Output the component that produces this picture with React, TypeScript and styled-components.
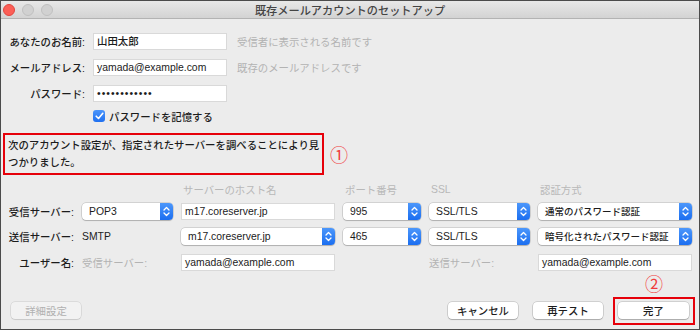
import styled, { createGlobalStyle } from "styled-components";

const GlobalStyle = createGlobalStyle`
  html, body {
    margin: 0;
    padding: 0;
    background: #ececec;
  }
  body {
    font-family: "Liberation Sans", "Noto Sans CJK JP", sans-serif;
    font-size: 10.4px;
    font-weight: 500;
    color: #1c1c1c;
  }
`;

const Window = styled.div`
  width: 700px;
  height: 330px;
  box-sizing: border-box;
  border: 1px solid #4b4b4b;
  background: #ececec;
  display: flex;
  flex-direction: column;
  overflow: hidden;
`;

const TitleBar = styled.div`
  flex: none;
  height: 17px;
  background: linear-gradient(#e8e8e8, #d3d3d3);
  border-bottom: 1px solid #b3b3b3;
  display: grid;
  grid-template-columns: 1fr auto 1fr;
  align-items: center;
`;

const Lights = styled.div`
  display: flex;
  gap: 7px;
  padding-left: 2px;
`;

const Light = styled.span<{ $red?: boolean }>`
  width: 12px;
  height: 12px;
  box-sizing: border-box;
  border-radius: 50%;
  background: ${(p) => (p.$red ? "#fc5f57" : "#d1d1d1")};
  border: 1px solid ${(p) => (p.$red ? "#e2463f" : "#c0c0c0")};
`;

const Title = styled.div`
  font-size: 11.2px;
  color: #444;
`;

const Identity = styled.div`
  margin-top: 14px;
  display: grid;
  grid-template-columns: 84px 134px auto;
  grid-auto-rows: 17px;
  column-gap: 8px;
  row-gap: 9px;
  align-items: center;
`;

const Label = styled.div`
  text-align: right;
  white-space: nowrap;
`;

const Hint = styled.div`
  color: #b3b3b3;
  font-weight: 400;
  padding-left: 2px;
  white-space: nowrap;
`;

const Field = styled.div`
  height: 17px;
  box-sizing: border-box;
  background: #fff;
  border: 1px solid #d9d9d9;
  padding-left: 3px;
  line-height: 15px;
  white-space: nowrap;
  overflow: hidden;
`;

const Dots = styled.span`
  letter-spacing: 1px;
`;

const CheckRow = styled.div`
  margin-top: 8px;
  margin-left: 92px;
  display: flex;
  align-items: center;
  gap: 4px;
  height: 12px;
`;

const CheckBox = styled.span`
  width: 12px;
  height: 12px;
  border-radius: 3px;
  background: linear-gradient(#4b95fb, #1f70f0);
  display: flex;
  align-items: center;
  justify-content: center;
`;

const Found = styled.div`
  margin-top: 11px;
  padding-left: 2px;
  display: flex;
  align-items: center;
  gap: 6px;
`;

const RedBox = styled.div`
  border: 2px solid #e6000a;
  box-sizing: border-box;
  width: 321px;
  padding: 2px 3px;
  line-height: 17px;
  white-space: nowrap;
`;

const Mark = styled.span`
  color: #f03c3c;
  font-family: "Noto Sans CJK JP", sans-serif;
  font-weight: 400;
  font-size: 18px;
  line-height: 18px;
`;

const Servers = styled.div`
  margin-top: 9px;
  display: grid;
  grid-template-columns: 73px 91px 154px 78px 101px 154px;
  grid-template-rows: 11px 17px 17px 19px;
  column-gap: 8px;
  row-gap: 8px;
  align-items: center;
`;

const Head = styled.div<{ $col: number }>`
  grid-column: ${(p) => p.$col};
  color: #b8b8b8;
  font-weight: 400;
  padding-left: 2px;
  white-space: nowrap;
`;

const Muted = styled.div`
  color: #b3b3b3;
  font-weight: 400;
  white-space: nowrap;
`;

const Plain = styled.div`
  white-space: nowrap;
`;

const SelectBox = styled.div`
  height: 17px;
  display: flex;
  background: #fff;
  border-radius: 4px;
  box-shadow: 0 0 0 0.5px rgba(0, 0, 0, 0.22), 0 1px 1px rgba(0, 0, 0, 0.16);
  white-space: nowrap;
`;

const SelectText = styled.div<{ $compact?: boolean }>`
  flex: 1;
  padding-left: 7px;
  font-size: ${(p) => (p.$compact ? "9.5px" : "10.4px")};
  line-height: 17px;
  overflow: hidden;
`;

const Stepper = styled.div`
  width: 13px;
  flex: none;
  border-radius: 0 4px 4px 0;
  background: linear-gradient(#4c97fb, #1b6ef0);
  display: flex;
  align-items: center;
  justify-content: center;
`;

const Footer = styled.div`
  margin-top: auto;
  display: flex;
  justify-content: space-between;
  align-items: flex-end;
  padding: 0 4px 4px 10px;
`;

const Actions = styled.div`
  display: flex;
  align-items: flex-end;
  gap: 15px;
`;

const Button = styled.div<{ $disabled?: boolean }>`
  width: 70px;
  height: 17px;
  margin-bottom: 6px;
  border-radius: 4px;
  background: ${(p) => (p.$disabled ? "#f2f2f2" : "#fff")};
  color: ${(p) => (p.$disabled ? "#b0b0b0" : "#1c1c1c")};
  font-weight: ${(p) => (p.$disabled ? 400 : 500)};
  box-shadow: 0 0 0 0.5px rgba(0, 0, 0, ${(p) => (p.$disabled ? 0.14 : 0.24)}),
    0 1px 1px rgba(0, 0, 0, ${(p) => (p.$disabled ? 0.08 : 0.18)});
  display: flex;
  align-items: center;
  justify-content: center;
  white-space: nowrap;
`;

const Done = styled.div`
  display: flex;
  flex-direction: column;
  align-items: center;
  gap: 5px;
  margin-left: -5px;
`;

const DoneBox = styled.div`
  border: 2px solid #e6000a;
  padding: 3px 4px 4px 3px;

  ${Button} {
    width: 71px;
    margin-bottom: 0;
  }
`;

function Chevrons() {
  return (
    <svg width="7" height="11" viewBox="0 0 7 11">
      <path
        d="M1 4 L3.5 1.5 L6 4 M1 7 L3.5 9.5 L6 7"
        fill="none"
        stroke="#fff"
        strokeWidth="1.3"
        strokeLinecap="round"
        strokeLinejoin="round"
      />
    </svg>
  );
}

function Select({ value, compact }: { value: string; compact?: boolean }) {
  return (
    <SelectBox>
      <SelectText $compact={compact}>{value}</SelectText>
      <Stepper>
        <Chevrons />
      </Stepper>
    </SelectBox>
  );
}

export default function App() {
  return (
    <>
      <GlobalStyle />
      <Window>
        <TitleBar>
          <Lights>
            <Light $red />
            <Light />
            <Light />
          </Lights>
          <Title>既存メールアカウントのセットアップ</Title>
          <div />
        </TitleBar>

        <Identity>
          <Label>あなたのお名前:</Label>
          <Field>山田太郎</Field>
          <Hint>受信者に表示される名前です</Hint>
          <Label>メールアドレス:</Label>
          <Field>yamada@example.com</Field>
          <Hint>既存のメールアドレスです</Hint>
          <Label>パスワード:</Label>
          <Field>
            <Dots>••••••••••••</Dots>
          </Field>
          <div />
        </Identity>
        <CheckRow>
          <CheckBox>
            <svg width="9" height="8" viewBox="0 0 9 8">
              <path
                d="M1.2 4.2 L3.5 6.5 L7.8 1.3"
                fill="none"
                stroke="#fff"
                strokeWidth="1.6"
                strokeLinecap="round"
                strokeLinejoin="round"
              />
            </svg>
          </CheckBox>
          パスワードを記憶する
        </CheckRow>

        <Found>
          <RedBox>
            次のアカウント設定が、指定されたサーバーを調べることにより見
            <br />
            つかりました。
          </RedBox>
          <Mark>①</Mark>
        </Found>

        <Servers>
          <Head $col={3}>サーバーのホスト名</Head>
          <Head $col={4}>ポート番号</Head>
          <Head $col={5}>SSL</Head>
          <Head $col={6}>認証方式</Head>

          <Label>受信サーバー:</Label>
          <Select value="POP3" />
          <Field>m17.coreserver.jp</Field>
          <Select value="995" />
          <Select value="SSL/TLS" />
          <Select value="通常のパスワード認証" compact />

          <Label>送信サーバー:</Label>
          <Plain>SMTP</Plain>
          <Select value="m17.coreserver.jp" />
          <Select value="465" />
          <Select value="SSL/TLS" />
          <Select value="暗号化されたパスワード認証" compact />

          <Label>ユーザー名:</Label>
          <Muted>受信サーバー:</Muted>
          <Field>yamada@example.com</Field>
          <div />
          <Muted>送信サーバー:</Muted>
          <Field>yamada@example.com</Field>
        </Servers>

        <Footer>
          <Button $disabled>詳細設定</Button>
          <Actions>
            <Button>キャンセル</Button>
            <Button>再テスト</Button>
            <Done>
              <Mark>②</Mark>
              <DoneBox>
                <Button>完了</Button>
              </DoneBox>
            </Done>
          </Actions>
        </Footer>
      </Window>
    </>
  );
}
